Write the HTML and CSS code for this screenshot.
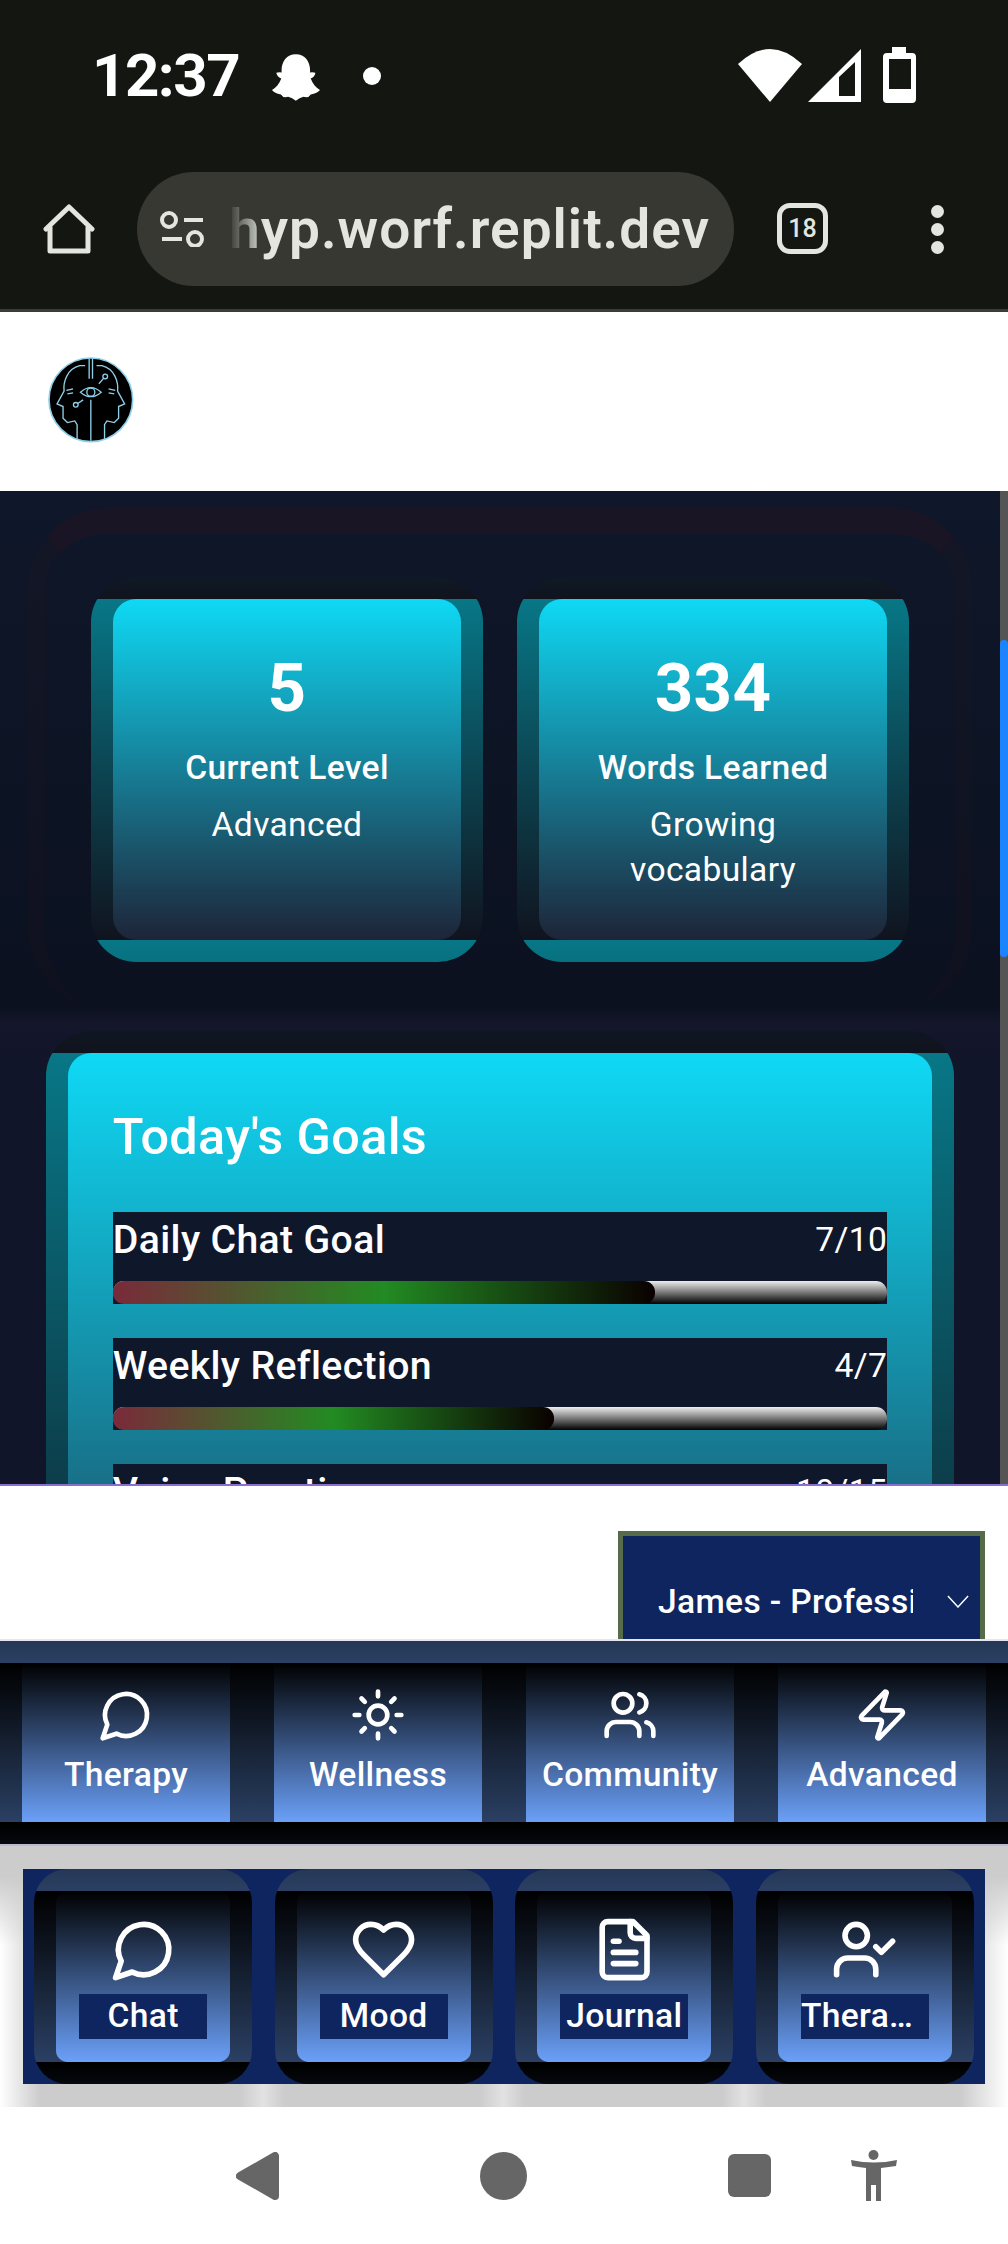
FILE: index.html
```html
<!DOCTYPE html>
<html lang="en">
<head>
  <meta charset="UTF-8">
  <meta name="viewport" content="width=device-width, initial-scale=1.0">
  <title>Dashboard</title>
  <link rel="stylesheet" href="styles.css">
</head>
<body>
  <!-- phone status bar -->
  <div class="statusbar">
    <span class="clock">12:37</span>
    <svg class="ghost" viewBox="635 72 145 140"><path d="M707 72C735 72 750 95 750 120L750 127Q758 125 766 128Q765 140 752 145C758 162 768 172 780 180Q772 190 752 193Q745 205 730 200Q718 203 707 212Q696 203 684 200Q669 205 662 193Q642 190 635 180C647 172 657 162 663 145Q650 140 648 128Q656 125 664 127L664 120C664 95 679 72 707 72Z"/></svg>
    <span class="status-dot"></span>
    <span class="status-right">
      <svg class="wifi" viewBox="738 48 64 53"><path d="M770 101L738 63Q770 33 802 63Z"/></svg>
      <svg class="signal" viewBox="808 49 53 53"><path fill-rule="evenodd" d="M808 102L861 49V102ZM839 77V96H855V62Z"/></svg>
      <svg class="battery" viewBox="883 47 33 56"><path fill-rule="evenodd" d="M892 47H906V53H912Q916 53 916 57V99Q916 103 912 103H887Q883 103 883 99V57Q883 53 887 53H892ZM889 59V89H911V59Z"/></svg>
    </span>
  </div>

  <!-- browser toolbar -->
  <div class="toolbar">
    <svg class="home" viewBox="43 203 52 52"><path d="M46 229L69 207L92 229M50 227V251H88V227"/></svg>
    <div class="urlbar">
      <svg class="site-opts" viewBox="0 0 44 36"><circle cx="9" cy="9" r="7"/><path d="M24 9H43"/><path d="M2 28H22"/><circle cx="35" cy="28" r="7"/></svg>
      <span class="url">hyp.worf.replit.dev</span>
    </div>
    <span class="tabs">18</span>
    <span class="menu-dots"><i></i><i></i><i></i></span>
  </div>

  <header class="app-header">
    <svg class="logo" viewBox="55 50 257 257">
      <circle cx="183" cy="178" r="125" class="logo-bg"/>
      <g class="logo-lines">
        <path d="M178 55V115M166 76H150C112 85 100 125 103 152L82 190L100 198V233L113 246L135 241L142 252V295"/>
        <path d="M188 55V115M200 76H216C254 85 266 125 263 152L284 190L266 198V233L253 246L231 241L224 252V295"/>
        <path d="M183 178V300"/>
        <path d="M152 155Q183 128 214 155Q183 182 152 155Z"/>
        <circle cx="183" cy="155" r="12"/>
        <path d="M207 130L221 114M160 178L144 189"/>
        <circle cx="226" cy="108" r="7"/>
        <circle cx="138" cy="193" r="7"/>
        <path d="M110 150L130 145M113 160L130 157M256 150L236 145M253 160L236 157"/>
      </g>
    </svg>
  </header>

  <main class="content">
    <div class="scroll-area">
      <section class="stats-frame">
        <div class="stats">
          <div class="card stat">
            <div class="stat-num">5</div>
            <div class="stat-label">Current Level</div>
            <div class="stat-desc">Advanced</div>
          </div>
          <div class="card stat">
            <div class="stat-num">334</div>
            <div class="stat-label">Words Learned</div>
            <div class="stat-desc">Growing vocabulary</div>
          </div>
        </div>
      </section>

      <section class="card goals">
        <h2>Today's Goals</h2>
        <div class="goal">
          <div class="goal-head"><span class="goal-name">Daily Chat Goal</span><span class="goal-count">7/10</span></div>
          <div class="track"><div class="fill" style="width: 70%"></div></div>
        </div>
        <div class="goal">
          <div class="goal-head"><span class="goal-name">Weekly Reflection</span><span class="goal-count">4/7</span></div>
          <div class="track"><div class="fill" style="width: 57%"></div></div>
        </div>
        <div class="goal">
          <div class="goal-head"><span class="goal-name">Voice Practice</span><span class="goal-count">10/15</span></div>
          <div class="track"><div class="fill" style="width: 67%"></div></div>
        </div>
      </section>
    </div>
    <div class="scrollbar"><div class="thumb"></div></div>
  </main>

  <div class="profile-band">
    <div class="profile-select">
      <span class="profile-name">James - Professional</span>
      <svg class="chevron" viewBox="0 0 24 14"><path d="M1 1L12 13L23 1"/></svg>
    </div>
  </div>

  <nav class="main-nav">
    <a class="nav-item">
      <svg class="icon" viewBox="0 0 24 24"><path d="M7.9 20A9 9 0 1 0 4 16.1L2 22Z"/></svg>
      <span>Therapy</span>
    </a>
    <a class="nav-item">
      <svg class="icon" viewBox="0 0 24 24"><circle cx="12" cy="12" r="4"/><path d="M12 2v2M12 20v2M4.93 4.93l1.41 1.41M17.66 17.66l1.41 1.41M2 12h2M20 12h2M6.34 17.66l-1.41 1.41M19.07 4.93l-1.41 1.41"/></svg>
      <span>Wellness</span>
    </a>
    <a class="nav-item">
      <svg class="icon" viewBox="0 0 24 24"><path d="M16 21v-2a4 4 0 0 0-4-4H6a4 4 0 0 0-4 4v2"/><circle cx="9" cy="7" r="4"/><path d="M22 21v-2a4 4 0 0 0-3-3.87"/><path d="M16 3.13a4 4 0 0 1 0 7.75"/></svg>
      <span>Community</span>
    </a>
    <a class="nav-item">
      <svg class="icon" viewBox="0 0 24 24"><path d="M4 14a1 1 0 0 1-.78-1.63l9.9-10.2a.5.5 0 0 1 .86.46l-1.92 6.02A1 1 0 0 0 13 10h7a1 1 0 0 1 .78 1.63l-9.9 10.2a.5.5 0 0 1-.86-.46l1.92-6.02A1 1 0 0 0 11 14z"/></svg>
      <span>Advanced</span>
    </a>
  </nav>

  <div class="sub-nav-wrap">
    <div class="sub-nav">
      <a class="sub-item">
        <svg class="icon" viewBox="0 0 24 24"><path d="M7.9 20A9 9 0 1 0 4 16.1L2 22Z"/></svg>
        <span class="sub-label">Chat</span>
      </a>
      <a class="sub-item">
        <svg class="icon" viewBox="0 0 24 24"><path d="M19 14c1.49-1.46 3-3.21 3-5.5A5.5 5.5 0 0 0 16.5 3c-1.76 0-3 .5-4.5 2-1.5-1.5-2.74-2-4.5-2A5.5 5.5 0 0 0 2 8.5c0 2.3 1.5 4.05 3 5.5l7 7Z"/></svg>
        <span class="sub-label">Mood</span>
      </a>
      <a class="sub-item">
        <svg class="icon" viewBox="0 0 24 24"><path d="M15 2H6a2 2 0 0 0-2 2v16a2 2 0 0 0 2 2h12a2 2 0 0 0 2-2V7Z"/><path d="M14 2v4a2 2 0 0 0 2 2h4"/><path d="M10 9H8"/><path d="M16 13H8"/><path d="M16 17H8"/></svg>
        <span class="sub-label">Journal</span>
      </a>
      <a class="sub-item">
        <svg class="icon" viewBox="0 0 24 24"><path d="M16 21v-2a4 4 0 0 0-4-4H6a4 4 0 0 0-4 4v2"/><circle cx="9" cy="7" r="4"/><polyline points="16 11 18 13 22 9"/></svg>
        <span class="sub-label">Therapist</span>
      </a>
    </div>
  </div>

  <!-- android nav buttons -->
  <div class="sysnav">
    <svg class="sys-back" viewBox="236 2151 43 48"><path d="M240 2175L275 2155V2195Z"/></svg>
    <span class="sys-home"></span>
    <span class="sys-recent"></span>
    <svg class="sys-access" viewBox="851 2151 46 51"><ellipse cx="873.5" cy="2156" rx="5" ry="5"/><path d="M851 2161Q874 2166 897 2161L896 2167Q889 2168 881 2169V2202H876V2186H871V2202H866V2169Q858 2168 852 2167Z"/></svg>
  </div>
</body>
</html>
```

FILE: styles.css
```css
html, body {
  margin: 0;
  padding: 0;
}
body {
  width: 1008px;
  height: 2244px;
  overflow: hidden;
  background: #fff;
  color: #fff;
  font-family: Roboto, "Liberation Sans", sans-serif;
  letter-spacing: .35px;
}
svg {
  display: block;
  flex: none;
}

/* status bar */
.statusbar {
  height: 150px;
  display: flex;
  align-items: center;
  padding-left: 92px;
  background: #141611;
}
.clock {
  font-size: 60px;
  font-weight: 700;
  letter-spacing: -1.5px;
  width: 180px;
}
.ghost {
  width: 48px;
  height: 47px;
  fill: #fff;
  margin-top: 4px;
}
.status-dot {
  width: 18px;
  height: 18px;
  border-radius: 50%;
  background: #fff;
  margin: 2px 0 0 43px;
}
.status-right {
  display: flex;
  align-items: center;
  margin-left: 357px;
  fill: #fff;
}
.wifi {
  width: 64px;
  height: 53px;
}
.signal {
  width: 53px;
  height: 53px;
  margin-left: 6px;
}
.battery {
  width: 33px;
  height: 56px;
  margin-left: 22px;
}

/* browser toolbar */
.toolbar {
  height: 159px;
  box-sizing: border-box;
  padding-top: 22px;
  display: flex;
  align-items: flex-start;
  background: #141611;
}
.home {
  width: 52px;
  height: 52px;
  margin: 31px 0 0 43px;
  fill: none;
  stroke: #e3e5de;
  stroke-width: 5;
  stroke-linejoin: round;
  stroke-linecap: round;
}
.urlbar {
  width: 597px;
  height: 114px;
  margin-left: 42px;
  border-radius: 57px;
  background: #363831;
  display: flex;
  align-items: center;
  box-sizing: border-box;
  padding-left: 23px;
}
.site-opts {
  width: 44px;
  height: 36px;
  fill: none;
  stroke: #e3e5de;
  stroke-width: 4;
}
.url {
  margin-left: 25px;
  color: #e3e5de;
  font-size: 55px;
  font-weight: 600;
  letter-spacing: 1px;
  white-space: nowrap;
  -webkit-mask-image: linear-gradient(to right, transparent, #000 36px);
  mask-image: linear-gradient(to right, transparent, #000 36px);
}
.tabs {
  width: 51px;
  height: 51px;
  box-sizing: border-box;
  margin: 31px 0 0 43px;
  border: 5px solid #e3e5de;
  border-radius: 13px;
  color: #e3e5de;
  font-size: 25px;
  font-weight: 500;
  letter-spacing: 0;
  display: flex;
  align-items: center;
  justify-content: center;
}
.menu-dots {
  display: flex;
  flex-direction: column;
  gap: 5px;
  margin: 33px 0 0 103px;
}
.menu-dots i {
  width: 13px;
  height: 13px;
  border-radius: 50%;
  background: #e3e5de;
}

/* page header */
.app-header {
  height: 182px;
  box-sizing: border-box;
  border-top: 3px solid #3a3c38;
  padding: 45px 0 0 48px;
  background: #fff;
}
.logo {
  width: 86px;
  height: 86px;
}
.logo-bg {
  fill: #000;
  stroke: #8fd0e8;
  stroke-width: 5;
}
.logo-lines {
  fill: none;
  stroke: #8fd0e8;
  stroke-width: 4;
}

/* scrolling content */
.content {
  height: 993px;
  display: flex;
  overflow: hidden;
}
.scroll-area {
  flex: 1;
  overflow: hidden;
  background: linear-gradient(#0f172a, #0b111f 515px, #14162a 532px, #10152a 600px);
}
.scrollbar {
  width: 8px;
  background: #555;
}
.thumb {
  height: 317px;
  margin-top: 149px;
  border-radius: 4px;
  background: #1a85ff;
}
.card {
  border: 22px solid rgba(0, 0, 0, .45);
  border-radius: 45px;
  background-image: linear-gradient(#0fd9f5, #1e2438);
}
.stats-frame {
  margin: 17px 28px 0;
  height: 501px;
  box-sizing: border-box;
  border: 17px solid rgba(40, 20, 30, .18);
  border-top: 26px solid #1a1525;
  border-bottom: 0;
  border-radius: 80px;
  padding: 43px 46px 0;
}
.stats {
  display: grid;
  grid-template-columns: 1fr 1fr;
  gap: 34px;
}
.stat {
  padding: 44.8px 44.8px 47px;
  text-align: center;
}
.stat-num {
  font-size: 67.2px;
  line-height: 89.6px;
  font-weight: 700;
}
.stat-label {
  margin-top: 12.5px;
  font-size: 33.6px;
  line-height: 44.8px;
  font-weight: 500;
}
.stat-desc {
  margin-top: 12.5px;
  font-size: 33.6px;
  line-height: 44.8px;
}
.goals {
  margin: 22px 46px 0;
  height: 790px;
  box-sizing: border-box;
  padding: 44.8px;
}
.goals h2 {
  margin: 0 0 36px;
  font-size: 50.4px;
  line-height: 78px;
  font-weight: 500;
}
.goal {
  background: #0f172a;
  margin-bottom: 34px;
}
.goal-head {
  display: flex;
  justify-content: space-between;
  align-items: center;
  height: 56px;
  margin-bottom: 13px;
}
.goal-name {
  font-size: 39.2px;
  font-weight: 500;
}
.goal-count {
  font-size: 33.6px;
}
.track {
  height: 23px;
  border-radius: 11px;
  background: linear-gradient(#eee, #000);
}
.fill {
  height: 100%;
  border-radius: 11px;
  background: linear-gradient(to right, #7a2a3a, #228b22 50%, #0a0000);
}

/* profile select */
.profile-band {
  height: 155px;
  box-sizing: border-box;
  border-top: 2px solid #8a6fd0;
  padding: 45px 23px 0 0;
  display: flex;
  justify-content: flex-end;
  overflow: hidden;
  background: #fff;
}
.profile-select {
  width: 367px;
  height: 140px;
  flex: none;
  box-sizing: border-box;
  border: 5px solid #556b4a;
  padding-left: 35px;
  display: flex;
  align-items: center;
  background: #0f2560;
}
.profile-name {
  width: 255px;
  overflow: hidden;
  white-space: nowrap;
  font-size: 33.6px;
  font-weight: 500;
}
.chevron {
  width: 22px;
  height: 13px;
  margin-left: 34px;
  fill: none;
  stroke: #fff;
  stroke-width: 1.6;
}

/* main nav */
.icon {
  fill: none;
  stroke: #fff;
  stroke-width: 2;
  stroke-linecap: round;
  stroke-linejoin: round;
}
.main-nav {
  display: flex;
  border-top: 2px solid #e6e6f0;
}
.nav-item {
  flex: 1;
  height: 203px;
  box-sizing: border-box;
  border: 22px solid rgba(0, 0, 0, .6);
  padding-top: 24px;
  display: flex;
  flex-direction: column;
  align-items: center;
  gap: 10px;
  font-size: 33.6px;
  line-height: 44.8px;
  font-weight: 500;
  background-image: linear-gradient(#000, #6ba0f8);
}
.nav-item .icon {
  width: 56px;
  height: 56px;
}

/* sub nav */
.sub-nav-wrap {
  height: 263px;
  box-sizing: border-box;
  border-top: 2px solid #bcb9d3;
  padding: 23px 23px 0;
  background:
    linear-gradient(#ccc 30px, rgba(204, 204, 204, 0) 100px),
    linear-gradient(to right, #fff, #ccc 40px, #ccc 240px, #e2e2e2 263px, #ccc 285px, #ccc 480px, #e2e2e2 503px, #ccc 525px, #ccc 722px, #e2e2e2 744px, #ccc 766px, #ccc 960px, #fff 1008px);
}
.sub-nav {
  display: flex;
  gap: 22.4px;
  padding: 0 11px;
  background: #0f2560;
}
.sub-item {
  flex: 1;
  height: 215px;
  box-sizing: border-box;
  border: 22px solid rgba(0, 0, 0, .6);
  border-radius: 33.6px;
  padding-top: 25px;
  display: flex;
  flex-direction: column;
  align-items: center;
  gap: 11px;
  background-image: linear-gradient(#000, #6ba0f8);
}
.sub-item .icon {
  width: 67.2px;
  height: 67.2px;
}
.sub-label {
  width: 128px;
  height: 45px;
  line-height: 43px;
  background: #0f2560;
  font-size: 33.6px;
  font-weight: 500;
  text-align: center;
  white-space: nowrap;
  overflow: hidden;
  text-overflow: ellipsis;
}

/* android buttons */
.sysnav {
  height: 137px;
  display: flex;
  align-items: center;
  padding-left: 236px;
  background: #fff;
  fill: #666;
}
.sys-back {
  width: 43px;
  height: 48px;
  stroke: #666;
  stroke-width: 8;
  stroke-linejoin: round;
}
.sys-home {
  width: 47px;
  height: 48px;
  margin-left: 201px;
  border-radius: 50%;
  background: #666;
}
.sys-recent {
  width: 43px;
  height: 43px;
  margin-left: 201px;
  border-radius: 6px;
  background: #666;
}
.sys-access {
  width: 46px;
  height: 51px;
  margin-left: 80px;
}
```
